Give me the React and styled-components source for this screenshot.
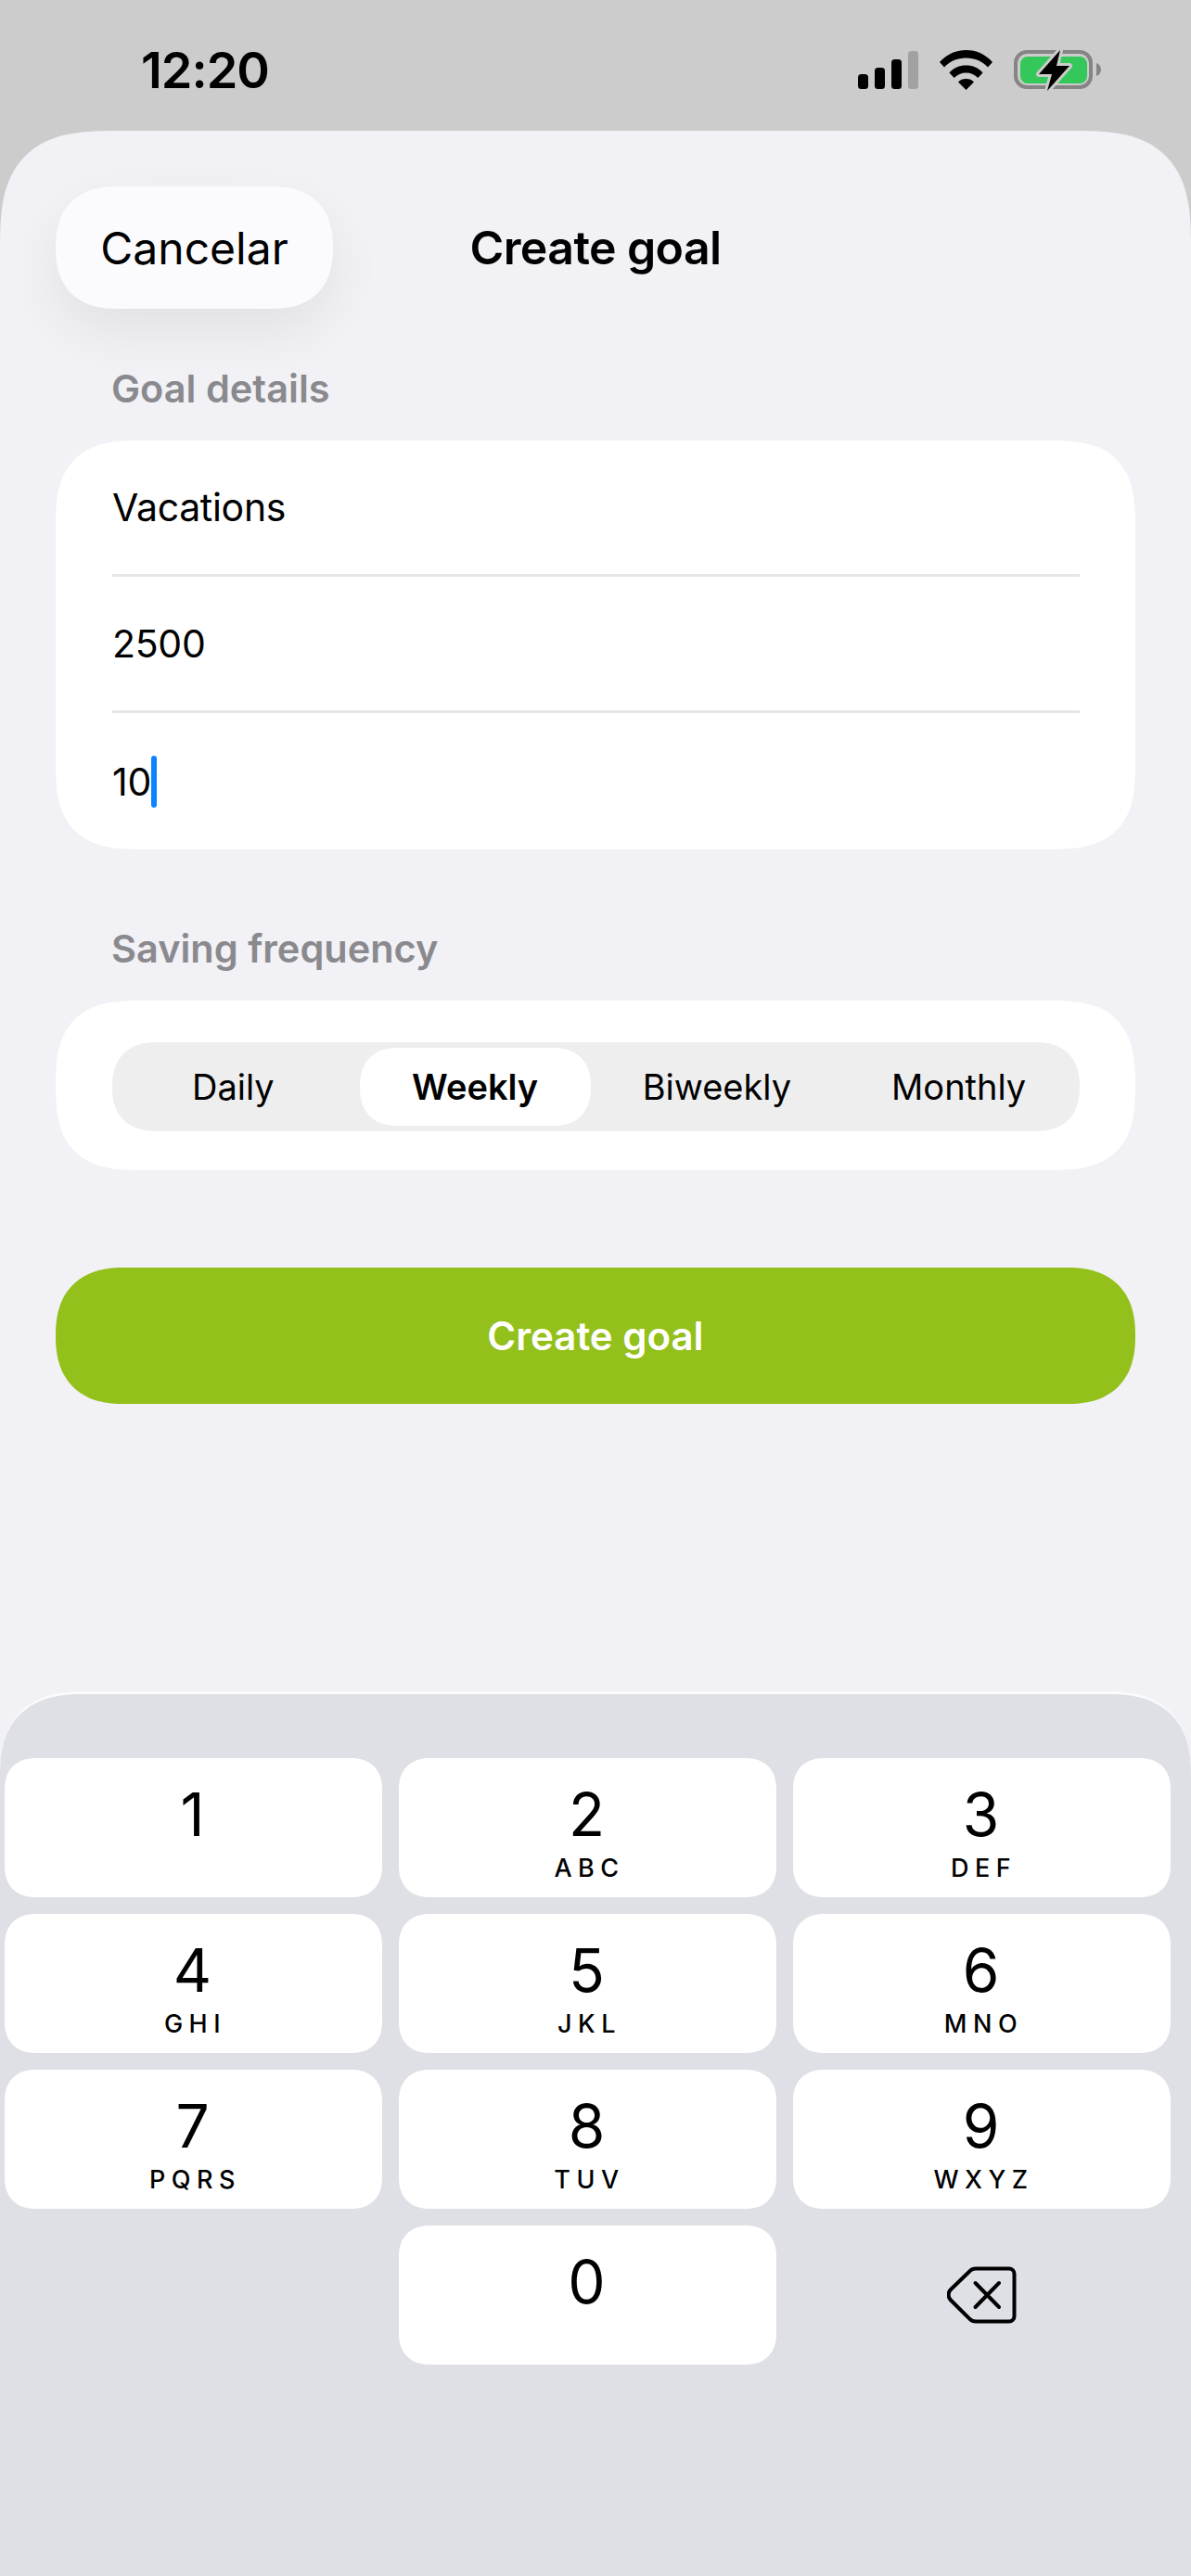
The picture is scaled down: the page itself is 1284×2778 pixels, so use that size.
import React from 'react';
import styled, { createGlobalStyle } from 'styled-components';

const GlobalStyle = createGlobalStyle`
  html, body {
    margin: 0;
    padding: 0;
    background: #cccccc;
  }
  * {
    box-sizing: border-box;
  }
`;

const Page = styled.div`
  width: 1284px;
  height: 2778px;
  display: flex;
  flex-direction: column;
  overflow: hidden;
  background: #cccccc;
  font-family: Inter, "Liberation Sans", sans-serif;
  color: #000;
`;

const StatusBar = styled.div`
  height: 141px;
  flex: none;
  display: flex;
  align-items: flex-start;
  justify-content: space-between;
  padding: 46px 97px 0 152px;
`;

const Clock = styled.div`
  font-size: 54px;
  line-height: 60px;
  font-weight: 600;
  letter-spacing: -1px;
`;

const StatusIcons = styled.div`
  display: flex;
  align-items: flex-start;
  gap: 23px;
  padding-top: 7px;
`;

const Sheet = styled.div`
  flex: 1;
  display: flex;
  flex-direction: column;
  background: #f1f1f6;
  border-radius: 125px 125px 0 0;
  corner-shape: superellipse(1.5);
`;

const Content = styled.div`
  padding: 60px 60px 0;
`;

const Header = styled.div`
  display: grid;
  grid-template-columns: 1fr auto 1fr;
  align-items: center;
`;

const CancelButton = styled.div`
  width: 299px;
  height: 132px;
  display: flex;
  align-items: center;
  justify-content: center;
  background: #fbfbfe;
  border-radius: 66px;
  corner-shape: superellipse(1.25);
  font-size: 48px;
  box-shadow: 0 24px 60px rgba(0, 0, 0, 0.07);
`;

const Title = styled.div`
  font-size: 50px;
  font-weight: 600;
  letter-spacing: -0.6px;
`;

const SectionLabel = styled.div`
  font-size: 41.5px;
  line-height: 50px;
  font-weight: 600;
  color: #8a8a8e;
  padding-left: 60px;
  margin-top: ${(p) => p.$top}px;
`;

const Card = styled.div`
  background: #fff;
  border-radius: 91px;
  corner-shape: superellipse(1.45);
  margin-top: 31px;
`;

const FieldList = styled(Card)`
  padding: 0 60px 0 61px;
`;

const Field = styled.div`
  height: 147px;
  display: flex;
  align-items: center;
  font-size: 41px;
  letter-spacing: -0.3px;
  border-bottom: ${(p) => (p.$last ? 'none' : '3px solid #e6e6e8')};
`;

const Caret = styled.span`
  width: 6px;
  height: 56px;
  border-radius: 3px;
  background: #0a84ff;
`;

const FrequencyCard = styled(Card)`
  padding: 45px 60px 42px 61px;
`;

const Segments = styled.div`
  height: 96px;
  display: grid;
  grid-template-columns: repeat(4, 1fr);
  background: #eeeeef;
  border-radius: 48px;
  corner-shape: superellipse(1.25);
`;

const Segment = styled.div`
  display: flex;
  align-items: center;
  justify-content: center;
  margin: 6px;
  font-size: 38px;
  font-weight: ${(p) => (p.$active ? 600 : 400)};
  background: ${(p) => (p.$active ? '#fff' : 'transparent')};
  border-radius: 42px;
  corner-shape: superellipse(1.25);
  white-space: nowrap;
`;

const CreateButton = styled.div`
  height: 147px;
  margin-top: 105px;
  display: flex;
  align-items: center;
  justify-content: center;
  background: #93c01a;
  color: #fff;
  font-size: 42px;
  font-weight: 600;
  border-radius: 74px;
  corner-shape: superellipse(1.25);
`;

const Keyboard = styled.div`
  margin-top: auto;
  height: 954px;
  padding: 69px 22px 0 5px;
  background: #dee0e5;
  border-top: 3px solid #fbfbfd;
  border-radius: 90px 90px 0 0;
  corner-shape: superellipse(1.3);
`;

const KeyGrid = styled.div`
  display: grid;
  grid-template-columns: repeat(3, 1fr);
  grid-auto-rows: 150px;
  gap: 18px;
`;

const Key = styled.div`
  display: flex;
  flex-direction: column;
  align-items: center;
  padding-top: 27px;
  background: #fff;
  border-radius: 34px;
  corner-shape: superellipse(1.2);
`;

const Digit = styled.div`
  font-size: 64px;
  line-height: 68px;
  margin-right: 2px;
`;

const Letters = styled.div`
  margin-top: 9px;
  font-size: 27px;
  line-height: 30px;
  font-weight: 500;
  letter-spacing: 6.5px;
  margin-right: -4px;
`;

const EmptyKey = styled.div``;

const BackspaceKey = styled.div`
  display: flex;
  align-items: flex-start;
  justify-content: center;
  padding-top: 44px;
`;

const keys = [
  ['1', ''],
  ['2', 'ABC'],
  ['3', 'DEF'],
  ['4', 'GHI'],
  ['5', 'JKL'],
  ['6', 'MNO'],
  ['7', 'PQRS'],
  ['8', 'TUV'],
  ['9', 'WXYZ'],
];

const SignalIcon = () => (
  <svg width="65" height="46" viewBox="0 0 65 46">
    <rect x="0" y="27" width="11" height="16" rx="3.5" fill="#000" />
    <rect x="18" y="20" width="11" height="23" rx="3.5" fill="#000" />
    <rect x="36" y="11" width="11" height="32" rx="3.5" fill="#000" />
    <rect x="54" y="2" width="11" height="41" rx="3.5" fill="#a2a2a2" />
  </svg>
);

const WifiIcon = () => (
  <svg width="57" height="46" viewBox="0 0 57 46">
    <path d="M0 14C7.500 5.500 17.500 1 28.500 1S49.500 5.500 57 14l-5 5.500C46 13 38 9.500 28.500 9.500S11 13 5 19.500z" fill="#000" />
    <path d="M10.500 25.500C15 20 21.500 17.500 28.500 17.500S42 20 46.500 25.500l-5.200 5.500C38 27.500 33.500 25.500 28.500 25.500S19 27.500 15.700 31z" fill="#000" />
    <path d="M20 35.500C22 33 25 32 28.500 32S35 33 37 35.500L28.500 44z" fill="#000" />
  </svg>
);

const BatteryIcon = () => (
  <svg width="94" height="46" viewBox="0 0 94 46">
    <rect x="2" y="3" width="81" height="38" rx="12" fill="none" stroke="#858585" strokeWidth="4" />
    <rect x="7" y="8" width="72" height="29" rx="8" fill="#34c759" />
    <path d="M89 15c3 1 5 4 5 7s-2 6-5 7z" fill="#858585" />
    <path
      d="M50 1L27 27H41L36 45L60 18H46z"
      fill="#000"
      stroke="#cccccc"
      strokeWidth="6"
      strokeLinejoin="round"
      paintOrder="stroke"
    />
  </svg>
);

const BackspaceIcon = () => (
  <svg width="75" height="62" viewBox="0 0 75 62" fill="none" stroke="#000" strokeLinecap="round" strokeLinejoin="round">
    <path
      d="M31 2.500H67a5.500 5.500 0 0 1 5.500 5.500V54a5.500 5.500 0 0 1-5.500 5.500H31a9 9 0 0 1-6.500-2.700L4 36.500a8 8 0 0 1 0-11.500L24.500 5.200A9 9 0 0 1 31 2.500z"
      strokeWidth="4"
    />
    <path d="M30.500 18L56 44M56 18L30.500 44" strokeWidth="4" />
  </svg>
);

export default function App() {
  return (
    <Page>
      <GlobalStyle />
      <StatusBar>
        <Clock>12:20</Clock>
        <StatusIcons>
          <SignalIcon />
          <WifiIcon />
          <BatteryIcon />
        </StatusIcons>
      </StatusBar>
      <Sheet>
        <Content>
          <Header>
            <CancelButton>Cancelar</CancelButton>
            <Title>Create goal</Title>
            <span />
          </Header>
          <SectionLabel $top={61}>Goal details</SectionLabel>
          <FieldList>
            <Field>Vacations</Field>
            <Field>2500</Field>
            <Field $last>
              10
              <Caret />
            </Field>
          </FieldList>
          <SectionLabel $top={82}>Saving frequency</SectionLabel>
          <FrequencyCard>
            <Segments>
              <Segment>Daily</Segment>
              <Segment $active>Weekly</Segment>
              <Segment>Biweekly</Segment>
              <Segment>Monthly</Segment>
            </Segments>
          </FrequencyCard>
          <CreateButton>Create goal</CreateButton>
        </Content>
        <Keyboard>
          <KeyGrid>
            {keys.map(([digit, letters]) => (
              <Key key={digit}>
                <Digit>{digit}</Digit>
                {letters && <Letters>{letters}</Letters>}
              </Key>
            ))}
            <EmptyKey />
            <Key>
              <Digit>0</Digit>
            </Key>
            <BackspaceKey>
              <BackspaceIcon />
            </BackspaceKey>
          </KeyGrid>
        </Keyboard>
      </Sheet>
    </Page>
  );
}
